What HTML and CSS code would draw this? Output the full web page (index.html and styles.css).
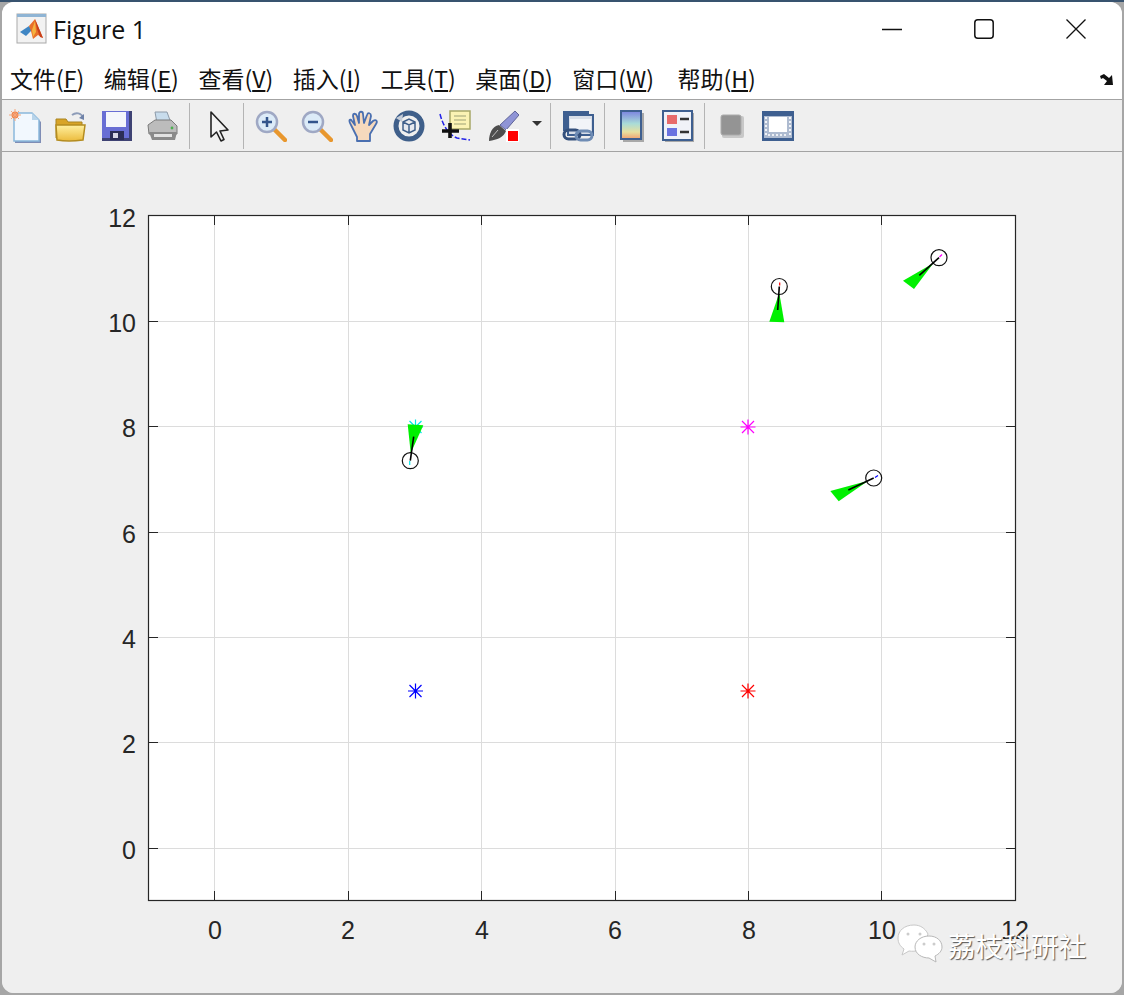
FILE: index.html
```html
<!DOCTYPE html>
<html lang="zh-CN">

<head>
    <meta charset="UTF-8">
    <title>Figure 1</title>
    <link rel="stylesheet" href="styles.css">
</head>

<body>
    <div class="window">

        <div class="titlebar">
            <svg class="app_icon" width="32" height="32" viewBox="0 0 32 32">
                <rect x="1" y="1" width="29" height="29" fill="#f2f2f2" stroke="#a9a9a9"/>
                <rect x="1" y="1" width="29" height="3" fill="#8fb4d4"/>
                <path d="M4 19 L13 13 L16 17 L10 23 Z" fill="#3f86c4"/>
                <path d="M13 13 L19 6 L27 25 L22 22 L17 26 L15 18 Z" fill="#e8702a"/>
                <path d="M19 6 L21 16 L24 24 L27 25 Z" fill="#c8401c"/>
                <path d="M16 17 L19 8 L20 19 L17 24 Z" fill="#f5b23e"/>
            </svg>
            <span class="title">Figure 1</span>
            <div class="controls">
                <button class="ctl"><svg width="20" height="20" viewBox="0 0 20 20"><path d="M0 10.5H20" stroke="#111" stroke-width="1.4"/></svg></button>
                <button class="ctl"><svg width="20" height="20" viewBox="0 0 20 20"><rect x="0.8" y="0.8" width="18.4" height="18.4" rx="3" fill="none" stroke="#111" stroke-width="1.5"/></svg></button>
                <button class="ctl"><svg width="20" height="20" viewBox="0 0 20 20"><path d="M0.5 0.5L19.5 19.5M19.5 0.5L0.5 19.5" stroke="#111" stroke-width="1.3"/></svg></button>
            </div>
        </div>

        <div class="menubar">
            <span class="menu">文件(<u>F</u>)</span>
            <span class="menu">编辑(<u>E</u>)</span>
            <span class="menu">查看(<u>V</u>)</span>
            <span class="menu">插入(<u>I</u>)</span>
            <span class="menu">工具(<u>T</u>)</span>
            <span class="menu">桌面(<u>D</u>)</span>
            <span class="menu menu_wide">窗口(<u>W</u>)</span>
            <span class="menu">帮助(<u>H</u>)</span>
            <svg class="dock" width="16" height="14" viewBox="0 0 16 14">
                <path d="M1 3 L5 1 L10 5 L13 2 L14 12 L5 12 L8 8 L4 5 L2 6 Z" fill="#111"/>
            </svg>
        </div>

        <div class="toolbar">
            <div class="tool"><svg width="32" height="34" viewBox="0 0 32 34">
                <path d="M6 5 H24 L32 13 V34 H6 Z" fill="#7f8db5"/>
                <path d="M5 4 H23 L30 11 V32 H5 Z" fill="#f2f8fe" stroke="#8ab8dc" stroke-width="1.5"/>
                <path d="M23 4 V11 H30 Z" fill="#b8d4ea"/>
                <circle cx="6" cy="6" r="3.5" fill="#f0834a"/>
                <path d="M6 0V12M0 6H12M2 2L10 10M10 2L2 10" stroke="#f4a77c" stroke-width="1"/>
            </svg></div>
            <div class="tool"><svg width="32" height="32" viewBox="0 0 32 32">
                <defs><linearGradient id="folder" x1="0" y1="0" x2="0" y2="1">
                    <stop offset="0" stop-color="#fff0a0"/><stop offset="1" stop-color="#ecbc3e"/>
                </linearGradient></defs>
                <path d="M17 5 C21 2 26 3 28 7" fill="none" stroke="#8d9cb8" stroke-width="2"/>
                <path d="M29 4 L29 10 L24 8 Z" fill="#6f82a8"/>
                <path d="M1 9 H11 L13 12 H27 V28 H1 Z" fill="#d8a428" stroke="#a98420"/>
                <path d="M1 15 H30 L28 30 C20 31 8 31 2 30 Z" fill="url(#folder)" stroke="#b48c20" stroke-width="1.5"/>
            </svg></div>
            <div class="tool"><svg width="32" height="32" viewBox="0 0 32 32">
                <path d="M1 1 H31 V31 H1 Z" fill="#3e4273"/>
                <path d="M1 1 H28 V28 H1 Z" fill="#686ed4"/>
                <rect x="5" y="2" width="20" height="15" fill="#f4f6fb"/>
                <rect x="9" y="21" width="14" height="9" fill="#2c2e55"/>
                <rect x="12" y="23" width="5" height="5" fill="#d8d8e4"/>
            </svg></div>
            <div class="tool"><svg width="32" height="32" viewBox="0 0 32 32">
                <path d="M8 2 H20 L24 13 H10 Z" fill="#c8dcec" stroke="#8d9aa8"/>
                <path d="M1 15 L8 10 H24 L30 16 V24 H2 Z" fill="#bcbcbc" stroke="#7a7a7a"/>
                <path d="M2 22 H30 L28 30 H5 Z" fill="#8a8a8a"/>
                <rect x="7" y="24" width="18" height="3" fill="#e2e2e2"/>
                <circle cx="25" cy="18" r="1.4" fill="#4caf50"/>
            </svg></div>
            <div class="sep sep_wide"></div>
            <div class="tool"><svg width="32" height="32" viewBox="0 0 32 32">
                <path d="M7 2 V27 L12.500 22 L17 31 L20 29.500 L16 21 L24 20 Z" fill="#f2f2f2" stroke="#222" stroke-width="1.600" stroke-linejoin="round"/>
            </svg></div>
            <div class="sep sep_tight"></div>
            <div class="tool"><svg width="32" height="32" viewBox="0 0 32 32">
                <path d="M19 19 L30 30" stroke="#e8972e" stroke-width="4.500" stroke-linecap="round"/>
                <circle cx="12" cy="12" r="10" fill="#dcebf8" stroke="#9fa8c4" stroke-width="2.500"/>
                <path d="M12 7V17M7 12H17" stroke="#33558c" stroke-width="2.500"/>
            </svg></div>
            <div class="tool"><svg width="32" height="32" viewBox="0 0 32 32">
                <path d="M19 19 L30 30" stroke="#e8972e" stroke-width="4.500" stroke-linecap="round"/>
                <circle cx="12" cy="12" r="10" fill="#dcebf8" stroke="#9fa8c4" stroke-width="2.500"/>
                <path d="M7 12H17" stroke="#33558c" stroke-width="2.500"/>
            </svg></div>
            <div class="tool"><svg width="32" height="32" viewBox="0 0 32 32">
                <path d="M4 15 C1 10 3 8 5 11 L8 15 L6 6 C6 3 9 3 10 6 L12 13 L12 4 C12 1 16 1 16 4 L17 13 L20 5 C21 2 24 3 24 6 L22 15 L26 11 C29 9 31 11 29 14 L23 24 V31 H10 V27 Z" fill="#f6d9bd" stroke="#4a6fb0" stroke-width="1.800" stroke-linejoin="round"/>
            </svg></div>
            <div class="tool"><svg width="32" height="32" viewBox="0 0 32 32">
                <circle cx="16" cy="16" r="13" fill="none" stroke="#3f5f8a" stroke-width="5"/>
                <path d="M3 8 L10 4 L9 12 Z" fill="#c4ccd8"/>
                <path d="M10 12 L16 9 L22 12 V20 L16 23 L10 20 Z M10 12 L16 15 L22 12 M16 15 V23" fill="#e6e9ef" stroke="#3f5f8a" stroke-width="1.500"/>
            </svg></div>
            <div class="tool"><svg width="32" height="32" viewBox="0 0 32 32">
                <path d="M1 4 C4 16 10 25 18 28 L31 30" fill="none" stroke="#2222e8" stroke-width="1.500" stroke-dasharray="5 2"/>
                <rect x="11" y="1" width="20" height="18" fill="#fbf3b4" stroke="#a8a868" stroke-width="1.500"/>
                <path d="M15 6H27M15 10H27M15 14H27" stroke="#bdbd8a" stroke-width="1.500"/>
                <path d="M11 13V28M3 21H20" stroke="#111" stroke-width="3.600"/>
            </svg></div>
            <div class="tool tool_brush"><svg width="32" height="32" viewBox="0 0 32 32">
                <path d="M13 15 L28 1 L32 5 L19 20 Z" fill="#8f94d6" stroke="#5f6498"/>
                <path d="M2 31 C2 24 5 16 12 15 L19 21 C17 27 10 30 2 31 Z" fill="#4d4d4d"/>
                <path d="M5 27 L11 20" stroke="#bdbdbd"/>
                <rect x="19" y="19" width="13" height="13" fill="#fff"/>
                <rect x="21" y="21" width="10" height="10" fill="#f00"/>
            </svg></div>
            <div class="drop"><svg width="10" height="5" viewBox="0 0 10 5"><path d="M0 0H10L5 5Z" fill="#333"/></svg></div>
            <div class="sep sep_tight"></div>
            <div class="tool"><svg width="32" height="32" viewBox="0 0 32 32">
                <rect x="1" y="1" width="26" height="20" fill="#3e5f90"/>
                <rect x="6" y="5" width="25" height="20" fill="#d8dee8" stroke="#3e5f90" stroke-width="2"/>
                <rect x="8" y="9" width="21" height="12" fill="#f2f4f8"/>
                <rect x="2" y="20" width="16" height="9" rx="4.500" fill="none" stroke="#34507c" stroke-width="3"/>
                <rect x="14" y="21" width="16" height="9" rx="4.500" fill="none" stroke="#6f8cb4" stroke-width="3"/>
            </svg></div>
            <div class="sep"></div>
            <div class="tool"><svg width="24" height="32" viewBox="0 0 24 32">
                <defs><linearGradient id="cbar" x1="0" y1="0" x2="0" y2="1">
                    <stop offset="0" stop-color="#7b82e0"/><stop offset="0.45" stop-color="#a9dcd8"/><stop offset="0.75" stop-color="#e6e0a0"/><stop offset="1" stop-color="#f0a070"/>
                </linearGradient></defs>
                <rect x="3" y="3" width="21" height="29" fill="#a8a8a8"/>
                <rect x="1" y="1" width="20" height="28" fill="url(#cbar)" stroke="#3e5f90" stroke-width="2"/>
            </svg></div>
            <div class="tool"><svg width="32" height="32" viewBox="0 0 32 32">
                <rect x="3" y="3" width="29" height="29" fill="#a8a8a8"/>
                <rect x="1" y="1" width="29" height="29" fill="#f0f2f8" stroke="#3e5f90" stroke-width="2"/>
                <rect x="5" y="5" width="10" height="9" fill="#e86a6a"/>
                <rect x="5" y="18" width="10" height="8" fill="#6a72e0"/>
                <path d="M18 9H27M18 22H27" stroke="#333" stroke-width="2.500"/>
            </svg></div>
            <div class="sep"></div>
            <div class="tool"><svg width="24" height="24" viewBox="0 0 24 24">
                <rect x="2" y="2" width="22" height="22" rx="2" fill="#c8c8c8"/>
                <rect x="1" y="1" width="20" height="20" rx="2" fill="#949494" stroke="#ababab"/>
            </svg></div>
            <div class="tool"><svg width="32" height="30" viewBox="0 0 32 30">
                <rect x="0" y="0" width="32" height="30" fill="#3e5f90"/>
                <rect x="2" y="5" width="28" height="22" fill="#aebbd0"/>
                <path d="M4 6V26M28 6V26" stroke="#f2f4f8" stroke-width="2" stroke-dasharray="2 2"/>
                <rect x="7" y="6" width="18" height="15" fill="#fff"/>
                <path d="M6 24H26" stroke="#eef0f4" stroke-width="2" stroke-dasharray="2 2"/>
            </svg></div>
        </div>

        <div class="figure">
            <svg class="plot" width="1120" height="841" viewBox="2 152 1120 841">
                <rect x="148.500" y="215.500" width="867" height="685" fill="#fff"/>

                <g class="grid">
                    <path d="M214.500 216V900M348.500 216V900M481.500 216V900M615.500 216V900M748.500 216V900M881.500 216V900"/>
                    <path d="M149 321.500H1015M149 426.500H1015M149 532.500H1015M149 637.500H1015M149 742.500H1015M149 848.500H1015"/>
                </g>

                <g class="ticks">
                    <path d="M214.500 900V891M348.500 900V891M481.500 900V891M615.500 900V891M748.500 900V891M881.500 900V891"/>
                    <path d="M214.500 216V225M348.500 216V225M481.500 216V225M615.500 216V225M748.500 216V225M881.500 216V225"/>
                    <path d="M149 321.500H158M149 426.500H158M149 532.500H158M149 637.500H158M149 742.500H158M149 848.500H158"/>
                    <path d="M1015 321.500H1006M1015 426.500H1006M1015 532.500H1006M1015 637.500H1006M1015 742.500H1006M1015 848.500H1006"/>
                </g>
                <rect class="box" x="148.500" y="215.500" width="867" height="685"/>

                <g class="xlabels">
                    <text x="215" y="939">0</text>
                    <text x="348" y="939">2</text>
                    <text x="482" y="939">4</text>
                    <text x="615" y="939">6</text>
                    <text x="749" y="939">8</text>
                    <text x="882" y="939">10</text>
                    <text x="1015" y="939">12</text>
                </g>
                <g class="ylabels">
                    <text x="136" y="227">12</text>
                    <text x="136" y="332">10</text>
                    <text x="136" y="437">8</text>
                    <text x="136" y="543">6</text>
                    <text x="136" y="648">4</text>
                    <text x="136" y="753">2</text>
                    <text x="136" y="859">0</text>
                </g>

                <path class="star" stroke="#ff00ff" d="M748 419.500V434.500M740.500 427H755.500M742 421L754 433M754 421L742 433"/>
                <path class="star" stroke="#ff0000" d="M748 683.500V698.500M740.500 691H755.500M742 685L754 697M754 685L742 697"/>
                <path class="star" stroke="#0000ff" d="M415.500 683.500V698.500M408 691H423M409.500 685L421.500 697M421.500 685L409.500 697"/>
                <path class="star" stroke="#00e8e8" d="M415.500 419.500V434.500M408 427H423M409.500 421L421.500 433M421.500 421L409.500 433"/>

                <g class="car">
                    <polygon points="779.300,293 769.300,321.700 784.300,322.300"/>
                    <circle cx="779.300" cy="286.500" r="8"/>
                    <path class="head" d="M779.300 286.500L777.700 310"/>
                    <path class="dot_red" d="M779.700 282.500V285.500"/>
                </g>
                <g class="car">
                    <polygon points="933.300,263.300 903,280.700 914,289"/>
                    <circle cx="939" cy="257.700" r="8"/>
                    <path class="head" d="M939 257.700L919.300 275.300"/>
                    <path class="dot_pink" d="M942 254.500L939.500 257"/>
                </g>
                <g class="car">
                    <polygon points="868.300,480.700 830.300,491 838.700,501.300"/>
                    <circle cx="873.700" cy="478" r="8"/>
                    <path class="head" d="M873.700 478L848.300 490"/>
                    <path class="dot_blue" d="M878 475.500L875 477.500"/>
                </g>
                <g class="car">
                    <polygon points="410.700,453.300 407.700,424.300 423.300,425.300"/>
                    <circle cx="410.300" cy="460.700" r="8"/>
                    <path class="head" d="M410.300 460.700L413.700 436.700"/>
                    <path class="dot_cyan" d="M409.700 465V461"/>
                </g>
            </svg>

            <div class="mark">
                <svg width="46" height="40" viewBox="0 0 46 40">
                    <path d="M17 1 C7 1 1 7 1 14 C1 19 3 22 7 25 L5 31 L12 27 C19 28 24 26 27 22 L31 10 C28 4 23 1 17 1 Z" fill="#fff" stroke="#c8c8c8"/>
                    <path d="M32 12 C24 12 18 17 18 23 C18 30 25 34 32 34 L39 38 L38 32 C42 30 45 27 45 23 C45 17 40 12 32 12 Z" fill="#fff" stroke="#b8b8b8"/>
                    <circle cx="11" cy="10" r="1.500" fill="#ccc"/><circle cx="23" cy="10" r="1.500" fill="#ccc"/>
                    <circle cx="27" cy="20" r="1.500" fill="#ccc"/><circle cx="37" cy="20" r="1.500" fill="#ccc"/>
                </svg>
                <span class="mark_text">荔枝科研社</span>
            </div>
        </div>

    </div>
</body>

</html>
```
FILE: styles.css
```css
body {
    margin: 0;
    width: 1124px;
    height: 995px;
    overflow: hidden;
    background: linear-gradient(#38536f 2px, #a6a6a6 2px);
    font-family: "Noto Sans CJK SC", "Liberation Sans", sans-serif;
}

.window {
    margin: 2px 2px 0 2px;
    height: 991px;
    box-sizing: border-box;
    border-radius: 12px;
    overflow: hidden;
    background-color: #efefef;
    display: flex;
    flex-direction: column;
}

.titlebar {
    height: 58px;
    box-sizing: border-box;
    padding: 0 0 4px 14px;
    background-color: #fff;
    display: flex;
    align-items: center;
}

.app_icon {
    margin-right: 5px;
}

.title {
    font-family: "Open Sans", sans-serif;
    font-size: 25px;
    color: #111;
}

.controls {
    margin-left: auto;
    display: flex;
}

.ctl {
    width: 92px;
    height: 54px;
    padding: 0;
    border: 0;
    background: none;
    display: flex;
    align-items: center;
    justify-content: center;
}

.menubar {
    height: 39px;
    background-color: #fff;
    border-bottom: 1px solid #a3a3a3;
    display: flex;
    align-items: center;
    gap: 19.5px;
    padding: 0 7px 0 8px;
    font-size: 23px;
    color: #111;
}

.menu {
    white-space: nowrap;
    line-height: 30px;
    margin-bottom: 3px;
}

.menu_wide {
    margin-right: 4px;
}

.dock {
    margin-left: auto;
}

.toolbar {
    height: 52px;
    box-sizing: border-box;
    background-color: #efefef;
    border-bottom: 1px solid #a3a3a3;
    display: flex;
    align-items: center;
}

.tool {
    width: 46px;
    height: 32px;
    flex: none;
    display: flex;
    align-items: center;
    justify-content: center;
}

.tool_brush {
    padding-left: 3px;
    box-sizing: border-box;
}

.drop {
    width: 26px;
    flex: none;
    display: flex;
    justify-content: center;
    padding-bottom: 4px;
}

.sep {
    width: 1px;
    height: 46px;
    flex: none;
    background-color: #b4b4b4;
    margin: 0 4px 0 3px;
}

.sep_wide {
    margin: 0 7px 0 3px;
}

.sep_tight {
    margin: 0 4px 0 0;
}

.figure {
    flex: 1;
    position: relative;
    background-color: #efefef;
}

.plot {
    display: block;
}

.grid path {
    stroke: #dcdcdc;
    stroke-width: 1;
    fill: none;
}

.ticks path {
    stroke: #262626;
    stroke-width: 1;
    fill: none;
}

.box {
    fill: none;
    stroke: #262626;
    stroke-width: 1.2;
}

.xlabels text,
.ylabels text {
    font-family: "Liberation Sans", sans-serif;
    font-size: 25px;
    fill: #262626;
}

.xlabels text {
    text-anchor: middle;
}

.ylabels text {
    text-anchor: end;
}

.star {
    fill: none;
    stroke-width: 1.2;
}

.car polygon {
    fill: #00f000;
}

.car circle {
    fill: none;
    stroke: #111;
    stroke-width: 1.2;
}

.car path {
    fill: none;
    stroke-width: 1.2;
}

.car .head {
    stroke: #000;
    stroke-width: 1.6;
}

.car .dot_red {
    stroke: #f00;
}

.car .dot_pink {
    stroke: #f0f;
}

.car .dot_blue {
    stroke: #00f;
}

.car .dot_cyan {
    stroke: #00e8e8;
}

.mark {
    position: absolute;
    left: 895px;
    top: 772px;
    display: flex;
    align-items: center;
    gap: 5px;
}

.mark_text {
    font-family: "Noto Sans CJK SC", sans-serif;
    font-size: 27.6px;
    line-height: 38px;
    margin-top: 1px;
    color: #fff;
    text-shadow: 1px 1px 1px #555;
}
```
